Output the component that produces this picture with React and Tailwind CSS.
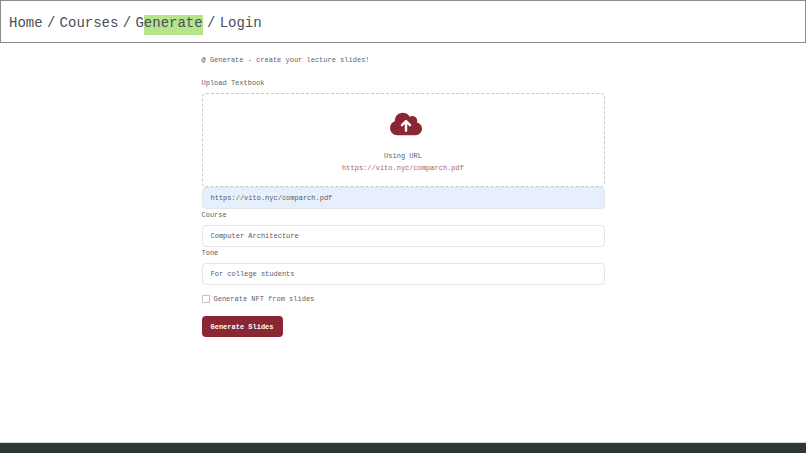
import { useState } from "react";
import { FaCloudArrowUp } from "react-icons/fa6";

const inputStyle =
  "block w-full h-[22px] px-2 rounded border border-[#e4e5e7] text-[#555b63] outline-none";

const Separator = () => <span className="w-[9px] text-center">/</span>;

const Navbar = () => (
  <nav className="h-[43px] px-2 pt-[3px] flex items-center gap-1 border border-[#8d8d8d] text-sm leading-5 text-[#4a4f58]">
    <a href="#home">Home</a>
    <Separator />
    <a href="#courses">Courses</a>
    <Separator />
    <a href="#generate">
      G<span className="bg-[#b5e48c] pb-1">enerate</span>
    </a>
    <Separator />
    <a href="#login">Login</a>
  </nav>
);

const App = () => {
  const [url, setUrl] = useState("https://vito.nyc/comparch.pdf");
  const [course, setCourse] = useState("Computer Architecture");
  const [tone, setTone] = useState("For college students");
  const [nft, setNft] = useState(false);

  return (
    <div className="min-h-screen flex flex-col bg-white font-['Liberation_Mono',monospace]">
      <Navbar />

      <main className="w-1/2 mx-auto pt-[11px] text-[7px] leading-3 text-[#5c616a]">
        <h1>@ Generate - create your lecture slides!</h1>

        <form className="mt-[11px]" onSubmit={(e) => e.preventDefault()}>
          <label htmlFor="url" className="block mb-1">
            Upload Textbook
          </label>
          <div className="h-[94px] pt-4 flex flex-col items-center rounded-sm border border-dashed border-[#c3cad2]">
            <FaCloudArrowUp className="w-8 h-7 ml-1.5 mb-3 text-[#8b2635]" />
            <p>Using URL</p>
            <a href={url} className="text-[#a8616d]">
              {url}
            </a>
          </div>
          <input
            id="url"
            type="text"
            value={url}
            onChange={(e) => setUrl(e.target.value)}
            className={`${inputStyle} bg-[#e8effc]`}
          />

          <label htmlFor="course" className="block mb-1">
            Course
          </label>
          <input
            id="course"
            type="text"
            value={course}
            onChange={(e) => setCourse(e.target.value)}
            className={inputStyle}
          />

          <label htmlFor="tone" className="block mb-1">
            Tone
          </label>
          <input
            id="tone"
            type="text"
            value={tone}
            onChange={(e) => setTone(e.target.value)}
            className={inputStyle}
          />

          <div className="mt-2 flex items-center gap-1">
            <input
              id="nft"
              type="checkbox"
              checked={nft}
              onChange={(e) => setNft(e.target.checked)}
              className="appearance-none size-2 border border-[#c9c5bd] bg-white checked:bg-[#8b2635]"
            />
            <label htmlFor="nft">Generate NFT from slides</label>
          </div>

          <button
            type="submit"
            className="mt-[11px] h-[21px] px-[9px] rounded bg-[#8b2635] font-bold text-white"
          >
            Generate Slides
          </button>
        </form>
      </main>

      <footer className="mt-auto h-[11px] border-t border-[#d5d7d7] bg-[#2f3737]" />
    </div>
  );
};

export default App;
